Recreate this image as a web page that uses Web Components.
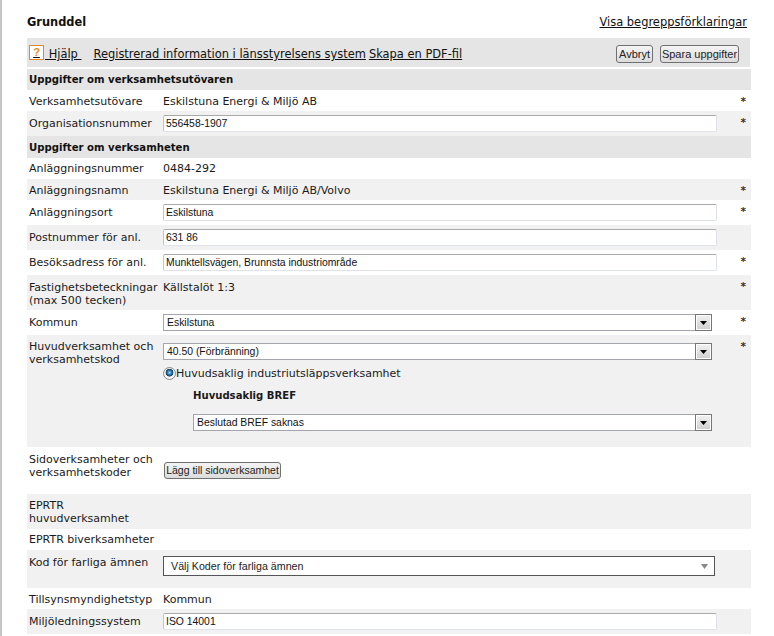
<!DOCTYPE html>
<html lang="sv">
<head>
<meta charset="utf-8">
<title>Grunddel</title>
<style>
  html, body { margin: 0; padding: 0; background: #fff; }
  body { font-family: "DejaVu Sans", Verdana, sans-serif; font-size: 11px; color: #111; }
</style>
</head>
<body>

<template id="grund-sida">
  <style>
    :host {
      display: block;
      box-sizing: border-box;
      height: 636px;
      border-left: 2px solid #c4c4c4;
      padding: 12px 23px 0 25px;
      overflow: hidden;
    }
    .huvud {
      display: flex;
      justify-content: space-between;
      align-items: center;
      height: 20px;
      margin-bottom: 6px;
      padding-right: 4px;
    }
    h1 { margin: 0; font-size: 11.4px; font-weight: bold; }
    ::slotted(a) { font-size: 11.45px; color: #111; }
  </style>
  <div class="huvud">
    <h1>Grunddel</h1>
    <slot name="begrepp"></slot>
  </div>
  <slot></slot>
</template>

<template id="grund-verktyg">
  <style>
    :host {
      display: flex;
      align-items: center;
      box-sizing: border-box;
      height: 29px;
      margin: 0 1px 2px 0;
      padding: 3px 11px 0 2px;
      background: #e5e5e5;
      font-size: 11.45px;
    }
    a { color: #111; text-decoration: underline; }
    .hjalp { display: flex; align-items: center; text-decoration: underline; white-space: pre; margin-right: 12px; }
    .ikon {
      box-sizing: border-box;
      width: 15px;
      height: 15px;
      margin: -3px 1px 0 0;
      border: 1px solid #e08a2a;
      background: #fff;
      color: #e08a2a;
      font: bold 11px/12px "Liberation Sans", Arial, sans-serif;
      text-align: center;
      text-decoration: none;
      display: inline-block;
    }
    .knappar { margin-left: auto; display: flex; gap: 7px; }
    ::slotted(a) { color: #111; margin-right: 3px; }
  </style>
  <a class="hjalp" href="#"><span class="ikon">?</span> Hjälp </a>
  <slot></slot>
  <div class="knappar"><slot name="knapp"></slot></div>
</template>

<template id="grund-rubrik">
  <style>
    :host {
      display: flex;
      align-items: center;
      box-sizing: border-box;
      height: 21px;
      padding-left: 2px;
      background: #e5e5e5;
      font-weight: bold;
      font-size: 10.15px;
    }
  </style>
  <slot></slot>
</template>

<template id="grund-rad">
  <style>
    :host {
      display: grid;
      grid-template-columns: 134px 588px;
      box-sizing: border-box;
      padding: 4px 0 4px 2px;
      line-height: 13px;
      font-size: 11px;
      color: #1a1a1a;
      position: relative;
    }
    :host([udda]) { background: #f1f1f1; }
    :host([text]) { padding-top: 5px; padding-bottom: 3px; }
    .etikett { padding-top: 2px; }
    :host([text]) .etikett { padding-top: 0; }
    .etikett ::slotted(*) { display: block; }
    .stjarna {
      position: absolute;
      right: 5px;
      top: 5px;
      font: bold 10.5px/13px "DejaVu Sans", Verdana, sans-serif;
      color: #333;
    }
  </style>
  <div class="etikett"><slot name="etikett"></slot></div>
  <div class="varde"><slot></slot></div>
  <span class="stjarna"></span>
</template>

<template id="grund-falt">
  <style>
    :host { display: block; }
    div {
      box-sizing: border-box;
      width: 554px;
      height: 17px;
      padding: 0 2px;
      background: #fff;
      border: 1px solid #dfe2e8;
      border-top-color: #a9a9a9;
      border-left-color: #c4c4c4;
      border-radius: 2px;
      font: 10.4px/16px "Liberation Sans", Arial, sans-serif;
      color: #111;
    }
  </style>
  <div><slot></slot></div>
</template>

<template id="grund-val">
  <style>
    :host { display: block; }
    .val {
      box-sizing: border-box;
      display: flex;
      justify-content: space-between;
      width: 549px;
      height: 17px;
      background: #fff;
      border: 1px solid #a5a5ad;
      font: 10.4px/15px "Liberation Sans", Arial, sans-serif;
      color: #111;
    }
    :host([kort]) .val { width: 519px; }
    .text { padding-left: 3px; }
    .pil {
      box-sizing: border-box;
      width: 17px;
      height: 17px;
      margin: -1px -1px 0 0;
      border: 1px solid #777;
      outline: 1px solid #fff;
      outline-offset: -2px;
      background: linear-gradient(#f2f2f2, #cfcfcf);
      display: flex;
      align-items: center;
      justify-content: center;
    }
  </style>
  <div class="val">
    <span class="text"><slot></slot></span>
    <span class="pil"><svg width="7" height="4" viewBox="0 0 7 4"><path d="M0 0h7L3.5 4z" fill="#000"/></svg></span>
  </div>
</template>

<template id="grund-knapp">
  <style>
    :host {
      display: inline-block;
      box-sizing: border-box;
      height: 18px;
      padding: 0;
      border: 1px solid #707070;
      border-radius: 3px;
      background: linear-gradient(#f4f4f4, #dcdcdc);
      font: 11px/16px "Liberation Sans", Arial, sans-serif;
      color: #222;
      text-align: center;
      white-space: nowrap;
    }
  </style>
  <slot></slot>
</template>

<template id="grund-flervals">
  <style>
    :host { display: block; }
    div {
      box-sizing: border-box;
      display: flex;
      justify-content: space-between;
      align-items: center;
      width: 552px;
      height: 20px;
      margin-top: 2px;
      padding: 0 6px 0 7px;
      background: #fff;
      border: 1px solid #555;
      font: 10.7px/18px "Liberation Sans", Arial, sans-serif;
      color: #222;
    }
  </style>
  <div>
    <span><slot></slot></span>
    <svg width="7" height="5" viewBox="0 0 7 5"><path d="M0 0h7L3.5 5z" fill="#888"/></svg>
  </div>
</template>

<template id="grund-radio">
  <style>
    :host { display: flex; align-items: center; gap: 0; height: 13px; margin-top: 7px; font-size: 11px; }
    i {
      box-sizing: border-box;
      width: 13px;
      height: 13px;
      border-radius: 50%;
      border: 1px solid #8a8a8a;
      background: radial-gradient(circle at 50% 42%, #a9d3ef 0, #2b7fb8 2px, #123f66 3.6px, #f4f4f4 4.2px);
    }
  </style>
  <i></i><span><slot></slot></span>
</template>

<template id="grund-bref">
  <style>
    :host { display: block; margin: 9px 0 12px 30px; height: 13px; font-weight: bold; font-size: 10.1px; }
  </style>
  <slot></slot>
</template>

<grund-sida>
  <a slot="begrepp" href="#">Visa begreppsförklaringar</a>

  <grund-verktyg>
    <a href="#">Registrerad information i länsstyrelsens system</a>
    <a href="#">Skapa en PDF-fil</a>
    <grund-knapp slot="knapp" style="width:37px">Avbryt</grund-knapp>
    <grund-knapp slot="knapp" style="width:79px">Spara uppgifter</grund-knapp>
  </grund-verktyg>

  <grund-rubrik>Uppgifter om verksamhetsutövaren</grund-rubrik>
  <grund-rad text stjarna style="height:21px"><span slot="etikett">Verksamhetsutövare</span>Eskilstuna Energi &amp; Miljö AB</grund-rad>
  <grund-rad udda stjarna style="height:25px"><span slot="etikett">Organisationsnummer</span><grund-falt>556458-1907</grund-falt></grund-rad>

  <grund-rubrik style="height:22px">Uppgifter om verksamheten</grund-rubrik>
  <grund-rad text style="height:21px;padding-top:4px"><span slot="etikett">Anläggningsnummer</span>0484-292</grund-rad>
  <grund-rad text udda stjarna style="height:21px"><span slot="etikett">Anläggningsnamn</span>Eskilstuna Energi &amp; Miljö AB/Volvo</grund-rad>
  <grund-rad stjarna style="height:25px"><span slot="etikett">Anläggningsort</span><grund-falt>Eskilstuna</grund-falt></grund-rad>
  <grund-rad udda style="height:25px"><span slot="etikett">Postnummer för anl.</span><grund-falt>631 86</grund-falt></grund-rad>
  <grund-rad stjarna style="height:25px"><span slot="etikett">Besöksadress för anl.</span><grund-falt>Munktellsvägen, Brunnsta industriområde</grund-falt></grund-rad>
  <grund-rad text udda stjarna style="height:35px;padding-top:6px"><span slot="etikett">Fastighetsbeteckningar<br>(max 500 tecken)</span>Källstalöt 1:3</grund-rad>
  <grund-rad stjarna style="height:25px"><span slot="etikett">Kommun</span><grund-val>Eskilstuna</grund-val></grund-rad>

  <grund-rad udda stjarna style="height:112px;padding-top:8px">
    <span slot="etikett" style="margin-top:-5px">Huvudverksamhet och<br>verksamhetskod</span>
    <grund-val>40.50 (Förbränning)</grund-val>
    <grund-radio>Huvudsaklig industriutsläppsverksamhet</grund-radio>
    <grund-bref>Huvudsaklig BREF</grund-bref>
    <grund-val kort style="margin-left:30px">Beslutad BREF saknas</grund-val>
  </grund-rad>

  <grund-rad style="height:47px;padding-top:15px">
    <span slot="etikett" style="margin-top:-11px">Sidoverksamheter och<br>verksamhetskoder</span>
    <grund-knapp style="width:117px;height:17px;margin-left:1px;font-size:10.5px;line-height:15px">Lägg till sidoverksamhet</grund-knapp>
  </grund-rad>

  <grund-rad text udda style="height:35px"><span slot="etikett">EPRTR<br>huvudverksamhet</span></grund-rad>
  <grund-rad text style="height:21px;padding-top:4px"><span slot="etikett">EPRTR biverksamheter</span></grund-rad>
  <grund-rad udda style="height:38px"><span slot="etikett">Kod för farliga ämnen</span><grund-flervals>Välj Koder för farliga ämnen</grund-flervals></grund-rad>
  <grund-rad text style="height:21px"><span slot="etikett">Tillsynsmyndighetstyp</span>Kommun</grund-rad>
  <grund-rad udda style="height:25px"><span slot="etikett">Miljöledningssystem</span><grund-falt>ISO 14001</grund-falt></grund-rad>
</grund-sida>

<script>
  class GrundElement extends HTMLElement {
    constructor() {
      super();
      let mall = document.getElementById(this.localName);
      this._shadow = this.attachShadow({ mode: 'open' });
      this._shadow.appendChild(mall.content.cloneNode(true));
    }
  }

  ['grund-sida', 'grund-verktyg', 'grund-rubrik', 'grund-falt', 'grund-val',
   'grund-knapp', 'grund-flervals', 'grund-radio', 'grund-bref'].forEach((namn) => {
    customElements.define(namn, class extends GrundElement {});
  });

  customElements.define('grund-rad', class extends GrundElement {
    connectedCallback() {
      if (this.hasAttribute('stjarna')) {
        this._shadow.querySelector('.stjarna').textContent = '*';
      }
    }
  });
</script>
</body>
</html>
